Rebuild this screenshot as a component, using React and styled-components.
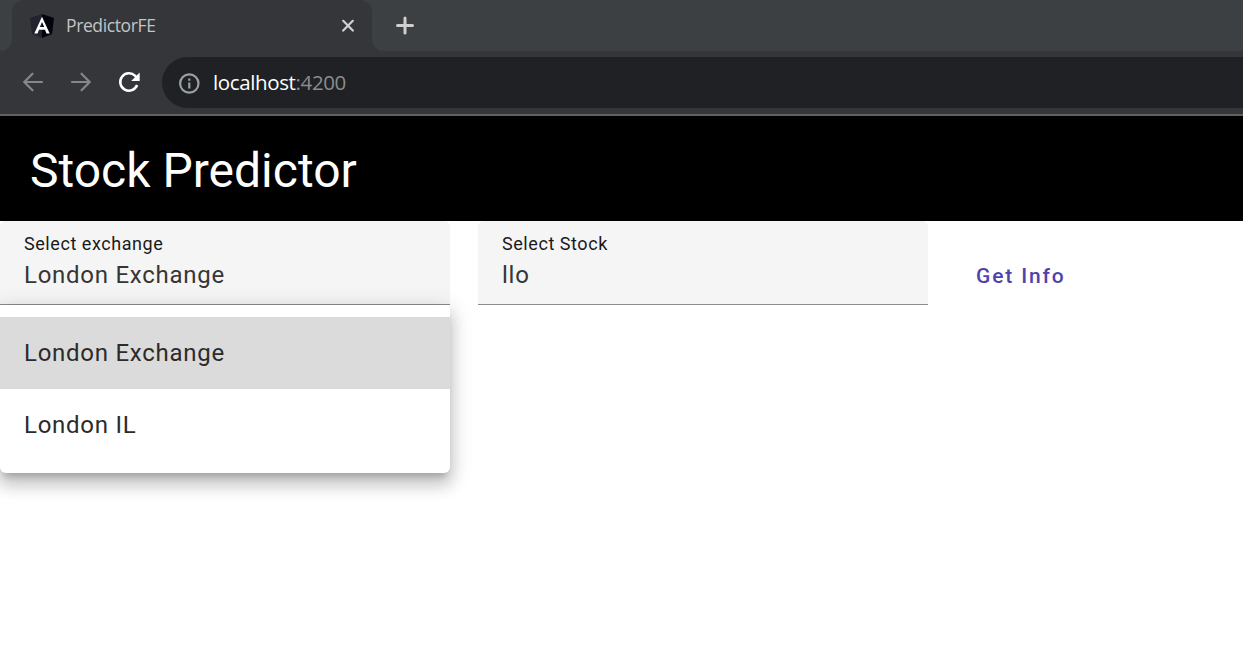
import React from "react";
import styled, { createGlobalStyle } from "styled-components";

const GlobalStyle = createGlobalStyle`
  * { box-sizing: border-box; }
  body {
    margin: 0;
    background: #fff;
    font-family: Roboto, sans-serif;
    overflow: hidden;
  }
`;

const Page = styled.div`
  display: flex;
  flex-direction: column;
  height: 660px;
  overflow: hidden;
`;

const TabStrip = styled.div`
  display: flex;
  height: 51px;
  background: #35363a;
`;

const StripEdge = styled.div`
  width: 12px;
  background: #3c4043;
  border-bottom-right-radius: 12px;
`;

const TabSlot = styled.div`
  width: 360px;
  background: linear-gradient(#3c4043 50%, #35363a 50%);
`;

const Tab = styled.div`
  display: flex;
  align-items: center;
  height: 51px;
  padding: 0 17px 0 18px;
  border-radius: 12px 12px 0 0;
  background: #35363a;
`;

const TabTitle = styled.span`
  flex: 1;
  margin: 0 0 2px 12px;
  color: #c3c4c6;
  font: 17.5px/24px "Open Sans", sans-serif;
  letter-spacing: -0.38px;
`;

const StripRest = styled.div`
  flex: 1;
  display: flex;
  align-items: center;
  padding-left: 23px;
  background: #3c4043;
  border-bottom-left-radius: 12px;
`;

const Toolbar = styled.div`
  display: flex;
  align-items: center;
  height: 65px;
  padding: 0 0 1px 21px;
  gap: 24px;
  background: #35363a;
  border-bottom: 2px solid #5f6062;
`;

const AddressBar = styled.div`
  flex: 1;
  display: flex;
  align-items: center;
  height: 51px;
  margin-left: -3px;
  padding: 2px 0 0 16px;
  border-radius: 26px 0 0 26px;
  background: #202124;
`;

const Address = styled.span`
  margin: 0 0 3px 13px;
  color: #fff;
  font: 20.5px/28px "Open Sans", sans-serif;
  letter-spacing: -0.37px;
`;

const Port = styled.span`
  color: #8b8c8e;
`;

const AppHeader = styled.header`
  display: flex;
  align-items: center;
  height: 105px;
  padding: 5px 30px 0;
  background: #000;
`;

const AppTitle = styled.h1`
  margin: 0;
  color: #fff;
  font-size: 48px;
  font-weight: 400;
  line-height: 56px;
`;

const Form = styled.main`
  display: flex;
  align-items: flex-start;
`;

const Field = styled.div`
  position: relative;
  width: 450px;
  height: 84px;
  margin-right: 28px;
  padding: 12px 24px 0;
  border-bottom: 1px solid #8c8c8c;
  border-radius: 6px 6px 0 0;
  background: #f5f5f5;
`;

const FieldLabel = styled.div`
  color: #1a1a1a;
  font-size: 18px;
  line-height: 22px;
  letter-spacing: 0.56px;
`;

const FieldValue = styled.div`
  margin-top: 2px;
  color: #363636;
  font-size: 24px;
  line-height: 36px;
  letter-spacing: 0.73px;
`;

const Menu = styled.div`
  position: absolute;
  top: 84px;
  left: 0;
  width: 450px;
  height: 168px;
  padding: 12px 0;
  border-radius: 0 0 6px 6px;
  background: #fff;
  box-shadow:
    0 7.5px 7.5px -4.5px rgba(0, 0, 0, 0.2),
    0 12px 15px 1.5px rgba(0, 0, 0, 0.14),
    0 4.5px 21px 3px rgba(0, 0, 0, 0.12);
`;

const Option = styled.div`
  height: 72px;
  padding: 0 24px;
  background: ${(p) => (p.$selected ? "#dbdbdb" : "#fff")};
  color: #2b2b2b;
  font-size: 24px;
  line-height: 72px;
  letter-spacing: 0.73px;
`;

const InfoButton = styled.button`
  height: 54px;
  margin-top: 28px;
  padding: 0 20px;
  border: 0;
  background: none;
  color: #4f43ab;
  font: 500 21px/54px Roboto, sans-serif;
  letter-spacing: 1.86px;
`;

const Glyph = styled.svg`
  display: block;
  flex: none;
  fill: none;
  stroke: ${(p) => p.$color};
  stroke-width: ${(p) => p.$weight || 2};
  stroke-linecap: ${(p) => (p.$round ? "round" : "butt")};
`;

const AngularLogo = () => (
  <Glyph width="24" height="24" viewBox="0 0 24 24" $color="none">
    <path fill="#22232e" d="M12 0 0 4l2 16 10 4z" />
    <path fill="#02030d" d="m12 0 12 4-2 16-10 4z" />
    <path fill="#fff" fillRule="evenodd" d="M12 2.800 4.300 19.500h3.200l1.500-3.800h6l1.500 3.800h3.200zm0 5.200 2.200 5H9.800z" />
  </Glyph>
);

export default function App() {
  return (
    <Page>
      <GlobalStyle />
      <TabStrip>
        <StripEdge />
        <TabSlot>
          <Tab>
            <AngularLogo />
            <TabTitle>PredictorFE</TabTitle>
            <Glyph width="14" height="14" viewBox="0 0 14 14" $color="#d0d1d2" $weight={2.2} $round>
              <path d="m2.200 1.800 9.600 9.800m0-9.800-9.600 9.800" />
            </Glyph>
          </Tab>
        </TabSlot>
        <StripRest>
          <Glyph width="20" height="20" viewBox="0 0 20 20" $color="#cfcfcf" $weight={3} $round>
            <path d="M10 2v15M2.500 9.500h15" />
          </Glyph>
        </StripRest>
      </TabStrip>
      <Toolbar>
        <Glyph width="24" height="24" viewBox="0 0 24 24" $color="#86878a" $weight={2.2} $round>
          <path d="M21 12H3.500M11.500 3.700 3.300 12l8.200 8.300" />
        </Glyph>
        <Glyph width="24" height="24" viewBox="0 0 24 24" $color="#86878a" $weight={2.2} $round>
          <path d="M3 12h17.500M12.500 3.700l8.200 8.300-8.200 8.300" />
        </Glyph>
        <Glyph width="24" height="24" viewBox="0 0 24 24" $color="#fff" $weight={2.5}>
          <path d="M20.100 15A8.700 8.700 0 1 1 18.200 5.900L20.500 8" />
          <path fill="#fff" stroke="none" d="M22.700 2.500v8.500h-8.500z" />
        </Glyph>
        <AddressBar>
          <Glyph width="22" height="22" viewBox="0 0 22 22" $color="#9aa0a6" $weight={2.2}>
            <circle cx="11.300" cy="11.500" r="9.200" />
            <path d="M11.300 10.500v6M11.300 6.500v2.200" />
          </Glyph>
          <Address>
            localhost<Port>:4200</Port>
          </Address>
        </AddressBar>
      </Toolbar>
      <AppHeader>
        <AppTitle>Stock Predictor</AppTitle>
      </AppHeader>
      <Form>
        <Field>
          <FieldLabel>Select exchange</FieldLabel>
          <FieldValue>London Exchange</FieldValue>
          <Menu>
            <Option $selected>London Exchange</Option>
            <Option>London IL</Option>
          </Menu>
        </Field>
        <Field>
          <FieldLabel>Select Stock</FieldLabel>
          <FieldValue>llo</FieldValue>
        </Field>
        <InfoButton>Get Info</InfoButton>
      </Form>
    </Page>
  );
}
